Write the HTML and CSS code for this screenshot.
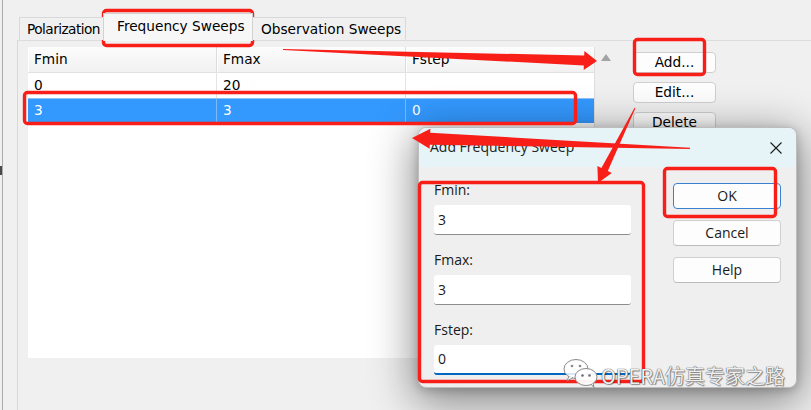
FILE: index.html
```html
<!DOCTYPE html>
<html>
<head>
<meta charset="utf-8">
<link rel="stylesheet" href="styles.css">
</head>
<body>
<div class="app">
  <div class="edge"><span class="edge-glyph"></span><span class="edge-line"></span></div>
  <div class="main">
    <div class="tabs">
      <div class="tab tab-pol">Polarization</div>
      <div class="tab tab-freq active">Frequency Sweeps</div>
      <div class="tab tab-obs">Observation Sweeps</div>
    </div>
    <div class="panel">
      <div class="grid">
        <div class="thead">
          <div class="th c1">Fmin</div>
          <div class="th c2">Fmax</div>
          <div class="th c3">Fstep</div>
        </div>
        <div class="row">
          <div class="td c1">0</div>
          <div class="td c2">20</div>
          <div class="td c3"></div>
        </div>
        <div class="row sel">
          <div class="td c1">3</div>
          <div class="td c2">3</div>
          <div class="td c3">0</div>
        </div>
      </div>
      <div class="vscroll">
        <svg class="arrow-up" width="10" height="7" viewBox="0 0 10 7"><polygon points="0,7 5,0 10,7" fill="#a3a3a3"/></svg>
      </div>
      <div class="actions">
        <div class="btn btn-add">Add...</div>
        <div class="btn btn-edit">Edit...</div>
        <div class="btn btn-del">Delete</div>
      </div>
    </div>
  </div>

  <div class="dialog">
    <div class="dlg-title">
      <span class="dlg-caption">Add Frequency Sweep</span>
      <svg class="dlg-close" width="12" height="12" viewBox="0 0 12 12"><path d="M0.5 0.5 L11.5 11.5 M11.5 0.5 L0.5 11.5" stroke="#1b1b1b" stroke-width="1.1" fill="none"/></svg>
    </div>
    <div class="dlg-body">
      <div class="fields">
        <div class="field">
          <div class="lbl">Fmin:</div>
          <div class="inp">3</div>
        </div>
        <div class="field">
          <div class="lbl">Fmax:</div>
          <div class="inp">3</div>
        </div>
        <div class="field">
          <div class="lbl">Fstep:</div>
          <div class="inp focus">0</div>
        </div>
      </div>
      <div class="dlg-btns">
        <div class="dbtn ok">OK</div>
        <div class="dbtn">Cancel</div>
        <div class="dbtn">Help</div>
      </div>
    </div>
  </div>

  <svg class="annot" width="811" height="410" viewBox="0 0 811 410">
    <g fill="none" stroke="#f81f19" stroke-width="3.4">
      <rect x="103.5" y="10.5" width="149" height="35" rx="3"/>
      <rect x="24.5" y="92.5" width="551" height="31" rx="3"/>
      <rect x="634.5" y="39.5" width="70" height="35" rx="3"/>
      <rect x="419.5" y="182.5" width="224" height="199" rx="3"/>
      <rect x="664.5" y="168.5" width="111" height="48" rx="3"/>
    </g>
    <g fill="#f81f19">
      <polygon points="283,49 584.2,55.5 584.4,51 597,61 583.7,70 583.8,65.5 283,50"/>
      <polygon points="412,138 430.4,128.7 430.2,132.7 690,147.8 690,149 429.8,144.7 429.6,148.7"/>
      <polygon points="634.6,107.8 635.4,108.2 607.8,171 611.8,173.1 598,183 597.4,166 601.4,168"/>
    </g>
  </svg>

  <div class="watermark">
    <svg class="wm-icon" width="38" height="30" viewBox="0 0 38 30">
      <ellipse cx="14" cy="11" rx="12" ry="9.5" fill="rgba(255,255,255,0.85)" stroke="#8a8a8a" stroke-width="1"/>
      <path d="M7 18 L5 23 L11 19.5" fill="rgba(255,255,255,0.85)" stroke="#8a8a8a" stroke-width="1"/>
      <circle cx="10" cy="8" r="1.3" fill="#8a8a8a"/>
      <circle cx="18" cy="8" r="1.3" fill="#8a8a8a"/>
      <ellipse cx="24" cy="19" rx="11" ry="8.5" fill="rgba(255,255,255,0.95)" stroke="#8a8a8a" stroke-width="1"/>
      <path d="M29 26 L32 29.5 L31 25" fill="rgba(255,255,255,0.95)" stroke="#8a8a8a" stroke-width="1"/>
      <circle cx="20.5" cy="17.5" r="1.3" fill="#6d6d6d"/>
      <circle cx="27.5" cy="17.5" r="1.3" fill="#6d6d6d"/>
    </svg>
    <span class="wm-text">OPERA仿真专家之路</span>
  </div>
</div>
</body>
</html>
```

FILE: styles.css
```css
* {
  box-sizing: border-box;
}

body {
  margin: 0;
  background: #f0f0f0;
  font-family: "DejaVu Sans", sans-serif;
  font-size: 13.7px;
  color: #000;
}

.app {
  position: relative;
  width: 811px;
  height: 410px;
  overflow: hidden;
  display: flex;
  background: #f0f0f0;
}

/* left window edge */
.edge {
  width: 17px;
  flex: none;
  display: flex;
}

.edge-glyph {
  width: 2px;
  height: 9px;
  margin-top: 166px;
  background: #4a4a4a;
}

.edge-line {
  width: 1px;
  background: #ababab;
}

.main {
  flex: 1;
  display: flex;
  flex-direction: column;
  padding-top: 17px;
}

/* tabs */
.tabs {
  display: flex;
  align-items: flex-start;
  height: 23px;
  padding-left: 2px;
  position: relative;
  z-index: 1;
}

.tab {
  height: 23px;
  border: 1px solid #d9d9d9;
  border-bottom: none;
  background: #f0f0f0;
  line-height: 22px;
  white-space: nowrap;
  overflow: hidden;
}

.tab-pol {
  width: 84px;
  padding-left: 7px;
  letter-spacing: -0.55px;
  border-right: none;
}

.tab-freq {
  width: 150px;
  padding-left: 13px;
}

.tab-obs {
  width: 153px;
  padding-left: 8px;
  border-left: none;
}

.tab.active {
  height: 28px;
  margin-top: -4px;
  background: #f7f7f7;
  border-color: #d2d2d2;
  line-height: 24px;
}

/* panel */
.panel {
  flex: 1;
  display: flex;
  align-items: flex-start;
  border-left: 1px solid #d8d8d8;
  border-top: 1px solid #dcdcdc;
  padding: 6px 0 0 10px;
}

.grid {
  width: 566px;
  height: 311px;
  background: #fff;
  display: flex;
  flex-direction: column;
  flex: none;
}

.thead {
  display: flex;
  height: 26px;
  background: linear-gradient(#fcfcfc, #f1f1f1);
  border-bottom: 1px solid #e2e2e2;
}

.th,
.td {
  padding-left: 6px;
  border-right: 1px solid #dcdcdc;
  white-space: nowrap;
}

.th {
  line-height: 25px;
  box-shadow: inset 1px 0 0 #ffffff;
}

.c1 { width: 189px; }
.c2 { width: 189px; }
.c3 { width: 188px; border-right: none; }

.row {
  display: flex;
  height: 25px;
}

.td {
  line-height: 25px;
  border-right-color: #e4e4e4;
}

.row.sel {
  background: #3399ff;
  color: #fff;
  border-top: 1px solid #8fc3f5;
}

.row.sel .td {
  line-height: 23px;
  border-right-color: #7dbbf8;
}

.vscroll {
  width: 39px;
  height: 311px;
  flex: none;
  border-left: 1px solid #dedede;
  padding: 7px 0 0 6px;
}

.arrow-up {
  display: block;
}

.actions {
  width: 83px;
  display: flex;
  flex-direction: column;
  gap: 9px;
  padding-top: 5px;
}

.btn {
  height: 21px;
  background: #fdfdfd;
  border: 1px solid #cfcfcf;
  border-radius: 4px;
  text-align: center;
  line-height: 19px;
}

/* dialog */
.dialog {
  position: absolute;
  left: 418px;
  top: 127px;
  width: 379px;
  height: 261px;
  border: 1px solid #bdbdbd;
  border-radius: 8px;
  background: #efefef;
  box-shadow: 0 10px 44px 4px rgba(0, 0, 0, 0.45), 0 2px 10px rgba(0, 0, 0, 0.2);
  overflow: hidden;
  font-family: "Open Sans", sans-serif;
  font-size: 14px;
  color: #1a1a1a;
}

.dlg-title {
  height: 39px;
  background: #e6f4f7;
  display: flex;
  align-items: center;
  justify-content: space-between;
  padding: 0 14px 0 11px;
}

.dlg-caption {
  color: #222;
  margin-top: -3px;
}

.dlg-close {
  display: block;
  margin-top: 1px;
}

.dlg-body {
  display: flex;
  gap: 42px;
  padding: 14px 0 0 15px;
}

.fields {
  width: 197px;
  display: flex;
  flex-direction: column;
  gap: 16px;
}

.field {
  display: flex;
  flex-direction: column;
  gap: 6px;
}

.lbl {
  line-height: 18px;
  height: 18px;
}

.inp {
  height: 30px;
  background: #fff;
  border-radius: 3px;
  border-bottom: 1px solid #8d8d8d;
  padding-left: 4px;
  line-height: 29px;
}

.inp.focus {
  border-bottom: 2px solid #0067c0;
  line-height: 28px;
}

.dlg-btns {
  width: 108px;
  display: flex;
  flex-direction: column;
  gap: 11px;
  padding-top: 2px;
}

.dbtn {
  height: 26px;
  background: #fdfdfd;
  border: 1px solid #d0d0d0;
  border-bottom-color: #bcbcbc;
  border-radius: 4px;
  text-align: center;
  line-height: 24px;
}

.dbtn.ok {
  border: 1px solid #3b80cf;
}

/* annotations */
.annot {
  position: absolute;
  left: 0;
  top: 0;
  pointer-events: none;
}

.watermark {
  position: absolute;
  left: 562px;
  top: 358px;
  display: flex;
  align-items: center;
  gap: 1px;
}

.wm-icon {
  display: block;
}

.wm-text {
  font-family: "Noto Sans CJK SC", "Noto Sans", sans-serif;
  font-size: 20px;
  line-height: 24px;
  color: rgba(255, 255, 255, 0.92);
  margin-top: 6px;
  text-shadow: 0 0 1px #555, 0 0 1px #555, 1px 1px 1px rgba(0, 0, 0, 0.35);
}
```
